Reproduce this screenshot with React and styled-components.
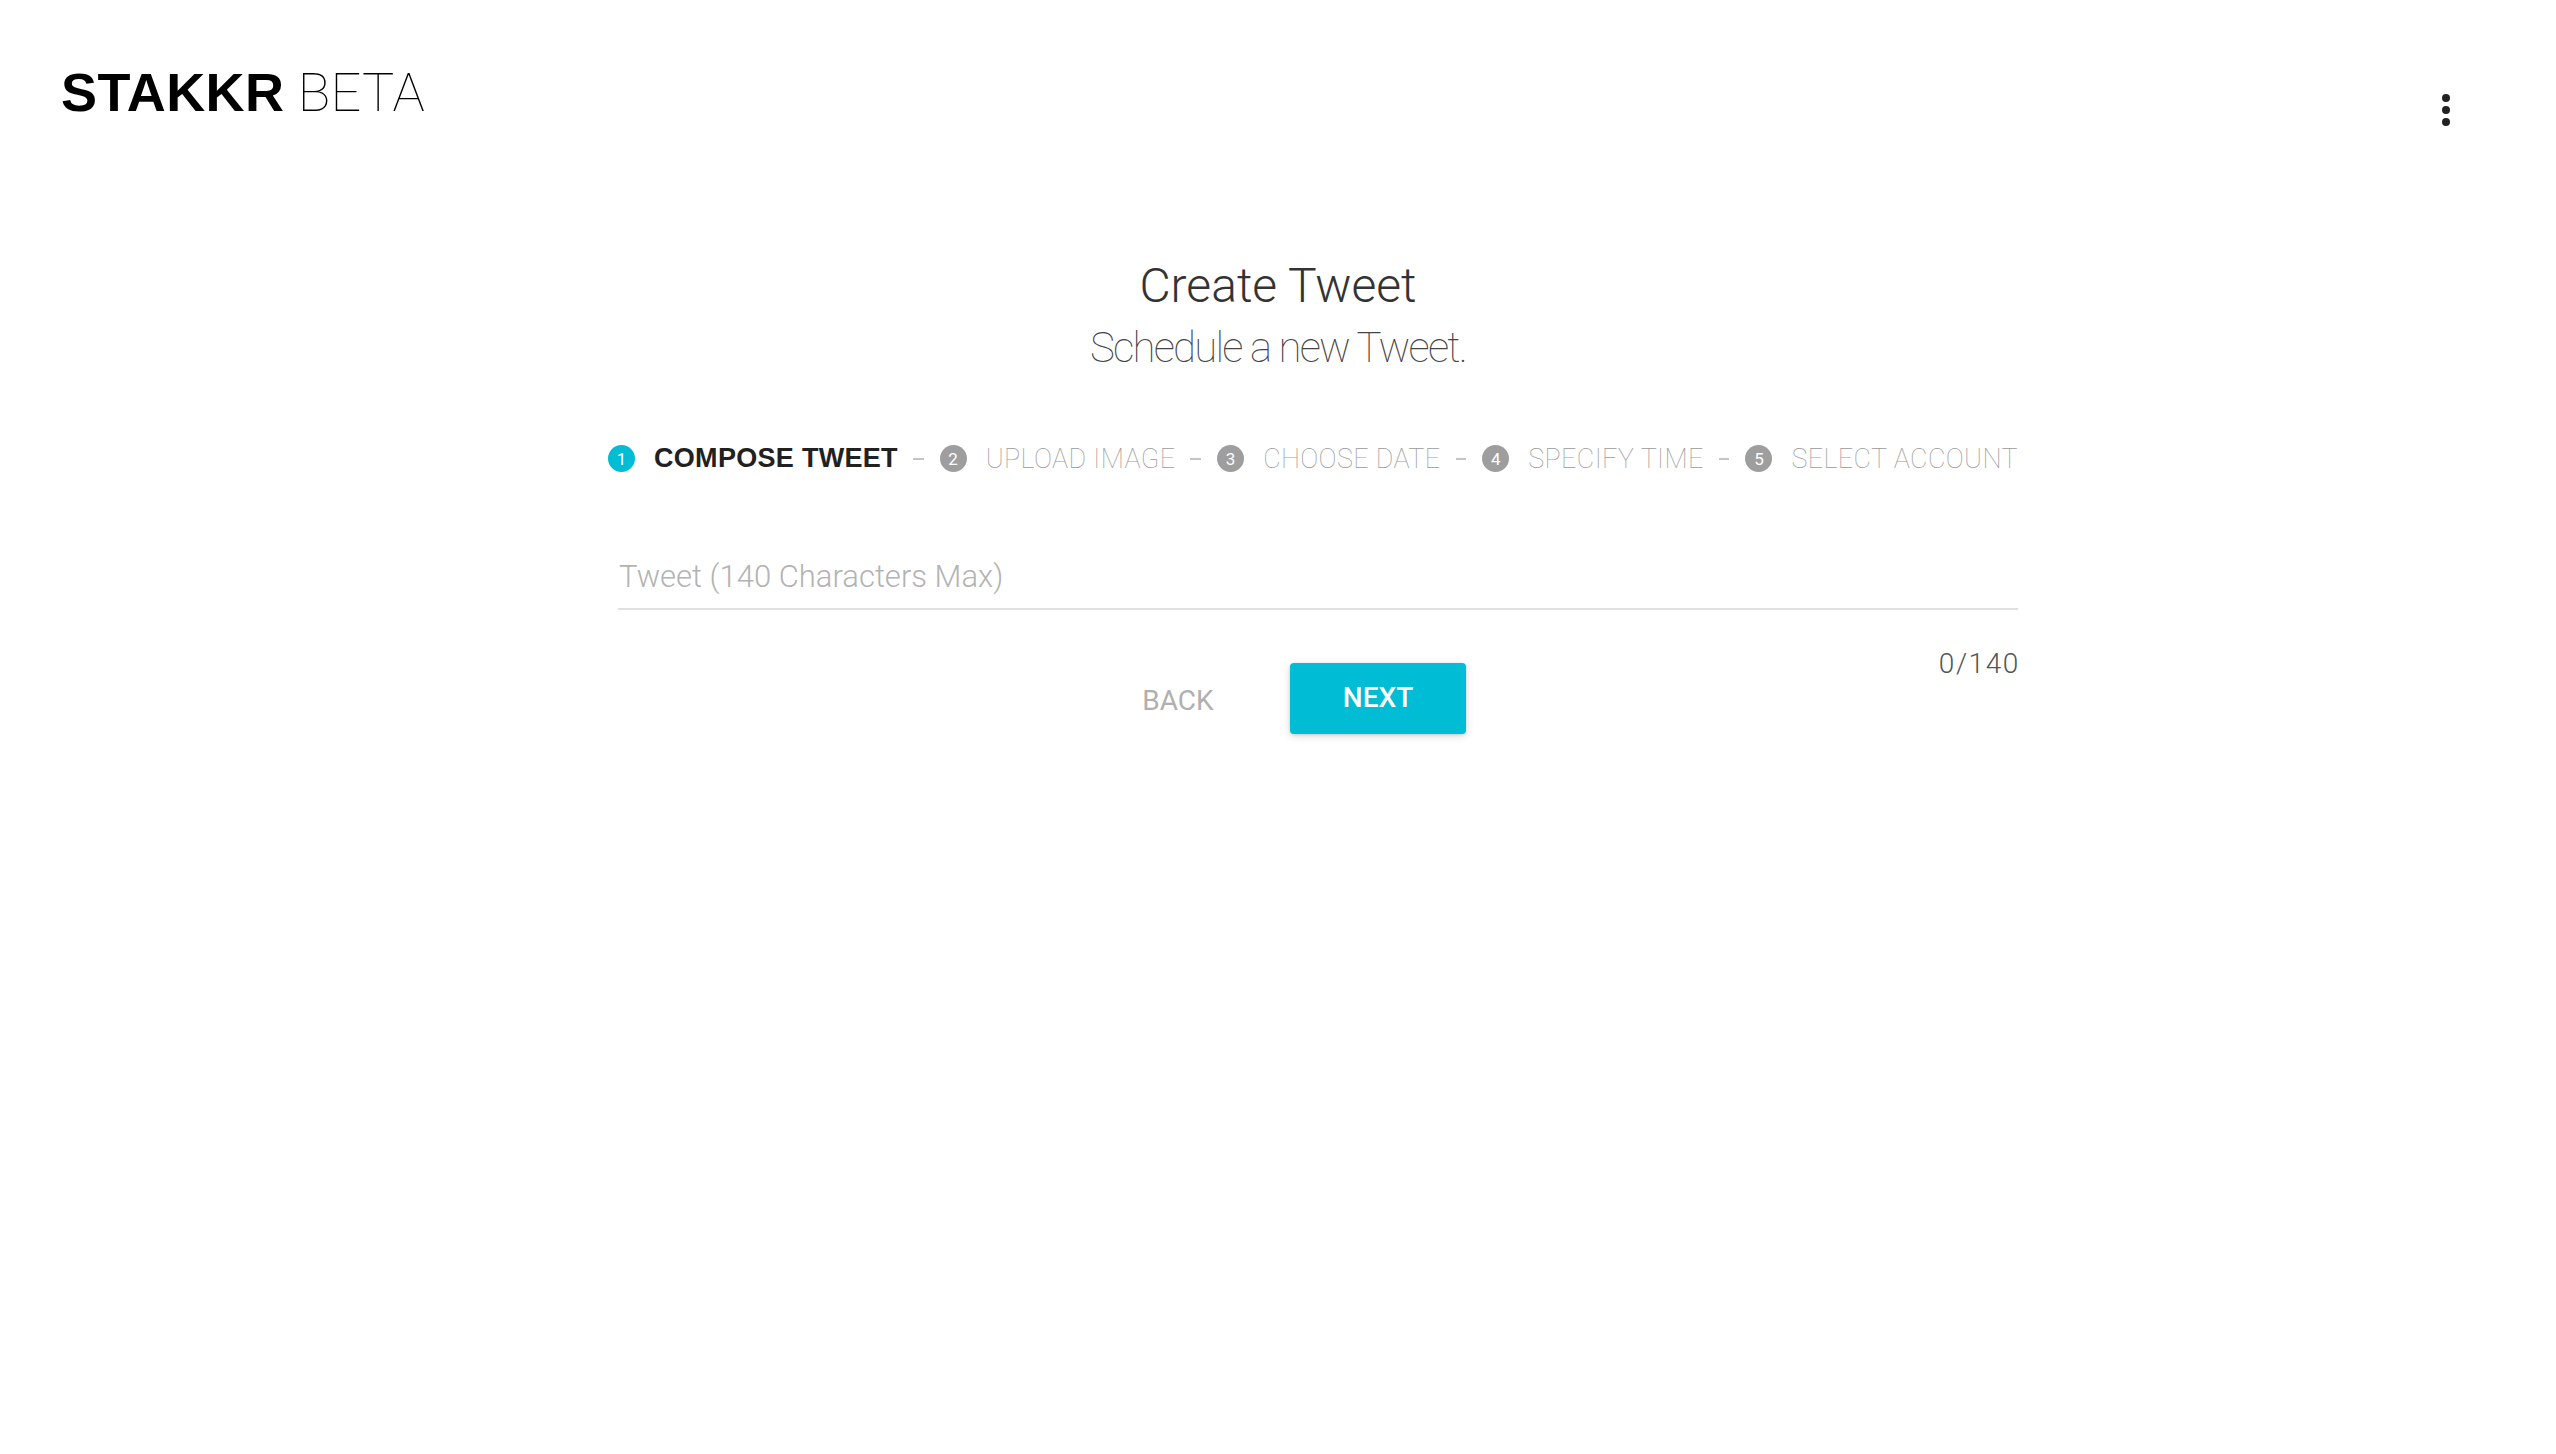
import React, { useState } from "react";
import styled, { createGlobalStyle } from "styled-components";

const GlobalStyle = createGlobalStyle`
  html, body {
    margin: 0;
    padding: 0;
    background: #ffffff;
  }
  body {
    font-family: Roboto, "Liberation Sans", Arial, sans-serif;
    color: #333;
  }
  * { box-sizing: border-box; }
`;

const Page = styled.div`
  min-height: 1454px;
  width: 100%;
  background: #fff;
`;

const Header = styled.header`
  display: flex;
  justify-content: space-between;
  align-items: flex-start;
  padding: 65px 84px 0 61px;
`;

const Logo = styled.div`
  font-size: 54px;
  line-height: 1;
  color: #000;
  white-space: nowrap;
`;

const LogoStrong = styled.span`
  font-family: "Liberation Sans", Arial, sans-serif;
  font-weight: 700;
  letter-spacing: 0.4px;
`;

const LogoThin = styled.span`
  font-family: Roboto, "Liberation Sans", sans-serif;
  font-weight: 100;
  letter-spacing: 0.2px;
`;

const MenuButton = styled.button`
  width: 48px;
  height: 48px;
  margin-top: 21px;
  padding: 0;
  border: 0;
  background: transparent;
  display: flex;
  align-items: center;
  justify-content: center;
  cursor: pointer;
`;

const Hero = styled.section`
  text-align: center;
  margin-top: 123px;
`;

const Title = styled.h1`
  margin: 0;
  font-family: Roboto, sans-serif;
  font-weight: 300;
  font-size: 48px;
  line-height: 1.2;
  color: #333;
`;

const Subtitle = styled.p`
  margin: 8px 0 0;
  font-family: Roboto, sans-serif;
  font-weight: 100;
  font-size: 42px;
  line-height: 1.2;
  letter-spacing: -1.8px;
  color: #444;
`;

const Content = styled.main`
  width: 1400px;
  margin-left: calc(50% - 660px);
`;

const Stepper = styled.ol`
  list-style: none;
  display: flex;
  align-items: center;
  height: 40px;
  margin: 66px 0 0 -10px;
  padding: 0;
`;

const Step = styled.li`
  display: flex;
  align-items: center;
  gap: 19px;
`;

const StepIcon = styled.span`
  width: 27px;
  height: 27px;
  border-radius: 50%;
  background: ${(p) => (p.$active ? "#00bcd4" : "#9e9e9e")};
  color: #fff;
  font-family: Roboto, sans-serif;
  font-size: 17px;
  font-weight: 400;
  display: flex;
  align-items: center;
  justify-content: center;
`;

const StepLabel = styled.span`
  font-size: 27px;
  white-space: nowrap;
  ${(p) =>
    p.$active
      ? `font-family: "Liberation Sans", Arial, sans-serif; font-weight: 700; color: #212121; letter-spacing: 0.3px;`
      : `font-family: Roboto, sans-serif; font-weight: 100; color: #9a9a9a; letter-spacing: 0.35px;`}
`;

const Connector = styled.span`
  display: block;
  width: 14px;
  height: 2px;
  margin: 0 16px 0 15px;
  background: #c4c4c4;
`;

const Field = styled.div`
  margin-top: 79px;
  border-bottom: 2px solid #e0e0e0;
`;

const TweetInput = styled.input`
  display: block;
  width: 100%;
  border: 0;
  outline: none;
  background: transparent;
  padding: 0 0 13px 1px;
  font-family: Roboto, sans-serif;
  font-weight: 300;
  font-size: 31px;
  line-height: 37px;
  color: #333;
  &::placeholder {
    color: #b3b3b3;
  }
`;

const Footer = styled.div`
  display: grid;
  grid-template-columns: 1fr auto 1fr 80px;
  align-items: start;
  margin-top: 37px;
`;

const Actions = styled.div`
  grid-column: 2;
  display: flex;
  gap: 24px;
  margin-top: 16px;
`;

const Counter = styled.div`
  grid-column: 3 / 5;
  justify-self: end;
  font-family: Roboto, sans-serif;
  font-weight: 300;
  font-size: 28px;
  line-height: 1.2;
  letter-spacing: 1.6px;
  margin-right: -2px;
  color: #555;
`;

const Button = styled.button`
  width: 176px;
  height: 71px;
  border: 0;
  border-radius: 4px;
  font-family: Roboto, sans-serif;
  font-size: 28px;
  text-transform: uppercase;
  cursor: pointer;
  background: ${(p) => (p.$primary ? "#00bcd4" : "transparent")};
  color: ${(p) => (p.$primary ? "#fff" : "#b0b0b0")};
  font-weight: ${(p) => (p.$primary ? 500 : 400)};
  padding-top: ${(p) => (p.$primary ? "0" : "6px")};
  box-shadow: ${(p) =>
    p.$primary
      ? "0 2px 8px rgba(0,0,0,0.14), 0 1px 3px rgba(0,0,0,0.12)"
      : "none"};
`;

const steps = [
  "Compose Tweet",
  "Upload Image",
  "Choose Date",
  "Specify Time",
  "Select Account",
];

function DotsIcon() {
  return (
    <svg width="48" height="48" viewBox="0 0 48 48" aria-hidden="true">
      <circle cx="22" cy="12" r="4" fill="#212121" />
      <circle cx="22" cy="24" r="4" fill="#212121" />
      <circle cx="22" cy="36" r="4" fill="#212121" />
    </svg>
  );
}

export default function App() {
  const [text, setText] = useState("");
  return (
    <Page>
      <GlobalStyle />
      <Header>
        <Logo>
          <LogoStrong>STAKKR</LogoStrong> <LogoThin>BETA</LogoThin>
        </Logo>
        <MenuButton aria-label="More options">
          <DotsIcon />
        </MenuButton>
      </Header>

      <Hero>
        <Title>Create Tweet</Title>
        <Subtitle>Schedule a new Tweet.</Subtitle>
      </Hero>

      <Content>
        <Stepper>
          {steps.map((label, i) => (
            <React.Fragment key={label}>
              {i > 0 && <Connector />}
              <Step>
                <StepIcon $active={i === 0}>{i + 1}</StepIcon>
                <StepLabel $active={i === 0}>{label.toUpperCase()}</StepLabel>
              </Step>
            </React.Fragment>
          ))}
        </Stepper>

        <Field>
          <TweetInput
            placeholder="Tweet (140 Characters Max)"
            maxLength={140}
            value={text}
            onChange={(e) => setText(e.target.value)}
          />
        </Field>

        <Footer>
          <Actions>
            <Button>Back</Button>
            <Button $primary>Next</Button>
          </Actions>
          <Counter>{text.length}/140</Counter>
        </Footer>
      </Content>
    </Page>
  );
}
